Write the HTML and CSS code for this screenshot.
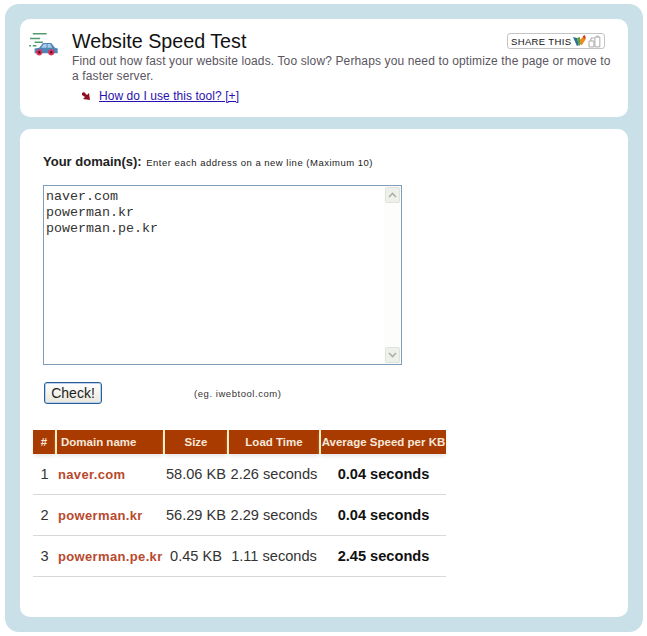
FILE: index.html
```html
<!DOCTYPE html>
<html lang="en">
<head>
<meta charset="utf-8">
<title>Website Speed Test</title>
<link rel="stylesheet" href="styles.css">
</head>
<body>
<div class="panel">
  <section class="card intro">
    <svg class="car" viewBox="0 0 34 26">
      <path d="M7 2h15M4 7h11M9 11h9M3 15h2M7 15h4" stroke="#4f9d6f" stroke-width="1.6" fill="none"/>
      <path d="M9 23v-5l5-1 4-5h9l4 5 3 1v5z" fill="#4f86b8"/>
      <path d="M19 13h3v4h-6zM23 13h3l2 4h-5z" fill="#a9cbe6"/>
      <circle cx="14" cy="22" r="3.4" fill="#d8365f"/><circle cx="14" cy="22" r="1.3" fill="#5a1028"/>
      <circle cx="27" cy="22" r="3.4" fill="#d8365f"/><circle cx="27" cy="22" r="1.3" fill="#5a1028"/>
    </svg>
    <div class="intro-body">
      <div class="title-row">
        <h1>Website Speed Test</h1>
        <div class="share">
          <span>SHARE THIS</span>
          <svg width="13" height="12" viewBox="0 0 13 12"><path d="M0 2l4 1 2 7-2 1z" fill="#2d6f96"/><path d="M4 3l3-1 1 7-2 2z" fill="#57a13f"/><path d="M7 5l4-4 2 3-4 6H8z" fill="#ef8a1d"/><path d="M10 1l2-1 1 3-2 1z" fill="#d9352b"/></svg>
          <svg width="13" height="13" viewBox="0 0 13 13"><path d="M1 6h5v6H1zM7 2h5v10H7zM3 6V3h3M9 2V1h2" fill="none" stroke="#a9a9a9"/></svg>
        </div>
      </div>
      <p>Find out how fast your website loads. Too slow? Perhaps you need to optimize the page or move to a faster server.</p>
      <div class="help">
        <svg width="9" height="9" viewBox="0 0 9 9"><path d="M0 1l2-1 3 3 2-2 1 7-7-1 2-2-3-2z" fill="#8c0f22"/></svg>
        <a href="#">How do I use this tool? [+]</a>
      </div>
    </div>
  </section>
  <section class="card main">
    <label class="domain-label" for="domains"><b>Your domain(s):</b> <span>Enter each address on a new line (Maximum 10)</span></label>
    <div class="textbox">
      <textarea id="domains" spellcheck="false">naver.com
powerman.kr
powerman.pe.kr</textarea>
      <div class="scroll">
        <div class="arrow"><svg width="9" height="6" viewBox="0 0 9 6"><path d="M1 5l3.5-3.5L8 5" fill="none" stroke="#a8b0a8" stroke-width="1.6"/></svg></div>
        <div class="arrow"><svg width="9" height="6" viewBox="0 0 9 6"><path d="M1 1l3.5 3.5L8 1" fill="none" stroke="#a8b0a8" stroke-width="1.6"/></svg></div>
      </div>
    </div>
    <div class="actions">
      <button type="button">Check!</button>
      <span>(eg. iwebtool.com)</span>
    </div>
    <table>
      <colgroup><col class="c1"><col class="c2"><col class="c3"><col class="c4"><col class="c5"></colgroup>
      <thead>
        <tr><th>#</th><th class="left">Domain name</th><th>Size</th><th>Load Time</th><th>Average Speed per KB</th></tr>
      </thead>
      <tbody>
        <tr><td>1</td><td class="left"><a href="#">naver.com</a></td><td>58.06 KB</td><td>2.26 seconds</td><td class="speed">0.04 seconds</td></tr>
        <tr><td>2</td><td class="left"><a href="#">powerman.kr</a></td><td>56.29 KB</td><td>2.29 seconds</td><td class="speed">0.04 seconds</td></tr>
        <tr><td>3</td><td class="left"><a href="#">powerman.pe.kr</a></td><td>0.45 KB</td><td>1.11 seconds</td><td class="speed">2.45 seconds</td></tr>
      </tbody>
    </table>
  </section>
</div>
</body>
</html>
```
FILE: styles.css
```css
html, body { margin: 0; padding: 0; background: #fff; }
body { font-family: "Liberation Sans", Arial, sans-serif; color: #222; }
.panel {
  width: 608px; height: 598px; margin: 4px 0 0 5px; padding: 15px;
  background: #c9e0e8; border-radius: 14px;
  display: flex; flex-direction: column; gap: 12px;
}
.card { background: #fff; border-radius: 10px; box-sizing: border-box; }
.intro { height: 98px; display: flex; padding: 10px 16px 0 8px; }
.car { flex: none; margin: 3px 14px 0 -2px; width: 32px; height: 24px; }
.intro-body { flex: 1; min-width: 0; }
.title-row { display: flex; justify-content: space-between; align-items: flex-start; }
h1 { margin: 0; font-size: 19.7px; font-weight: 400; line-height: 24px; color: #111; }
.share {
  display: flex; align-items: center; gap: 2px; box-sizing: border-box; height: 16px; width: 98px;
  margin: 4px 7px 0 0; padding: 0 3px 0 3px; border: 1px solid #c4c4c4; border-radius: 3px;
  font-size: 9.5px; letter-spacing: 0.35px; color: #111; white-space: nowrap;
}
.intro p { margin: 1px 0 0; font-size: 12px; letter-spacing: 0.13px; line-height: 15px; color: #5a5560; }
.help { display: flex; align-items: center; gap: 8px; margin: 5px 0 0 10px; font-size: 12px; letter-spacing: 0.06px; line-height: 15px; }
.help a { color: #2a0fb0; }
.main { height: 488px; padding: 24px 0 0 13px; }
.domain-label { display: block; margin-left: 10px; line-height: 16px; color: #222; }
.domain-label b { font-size: 13px; }
.domain-label span { font-size: 9.5px; letter-spacing: 0.5px; }
.textbox {
  display: flex; box-sizing: border-box; width: 359px; height: 180px; margin: 14px 0 0 10px;
  border: 1px solid #7f9db9;
}
textarea {
  flex: 1; min-width: 0; margin: 0; padding: 3px 2px; border: 0; outline: 0; resize: none; overflow: hidden;
  font-family: "Liberation Mono", "Courier New", monospace; font-size: 13.33px; line-height: 16px; color: #333;
}
.scroll { width: 17px; display: flex; flex-direction: column; justify-content: space-between; background: #fdfdfb; }
.arrow {
  height: 16px; margin: 1px; display: flex; align-items: center; justify-content: center;
  background: #eef0ea; border: 1px solid #e0e2dc; border-radius: 2px; box-sizing: border-box;
}
.actions { display: flex; align-items: center; margin: 17px 0 0 11px; }
button {
  box-sizing: border-box; width: 58px; height: 22px; padding: 0; margin: 0;
  border: 1px solid #2b5f94; border-radius: 3px;
  background: linear-gradient(#fff, #e9e7dc); box-shadow: inset 0 0 0 1px #b9d0ee;
  font-family: "Liberation Sans", Arial, sans-serif; font-size: 14px; color: #222;
}
.actions span { margin-left: 92px; font-size: 9.5px; letter-spacing: 0.55px; color: #333; }
table {
  width: 413px; margin-top: 26px; table-layout: fixed; border-collapse: collapse;
}
.c1 { width: 23px; } .c2 { width: 108px; } .c3 { width: 64px; } .c4 { width: 92px; } .c5 { width: 126px; }
th {
  height: 24px; padding: 0; background: #a93a00; color: #f6e8dc; font-size: 11.5px; font-weight: 700;
  text-align: center; border-left: 2px solid #ffeebb; white-space: nowrap;
  box-shadow: 0 3px 4px -1px #e4e4e4;
}
th:first-child { border-left: 0; }
th.left { text-align: left; padding-left: 4px; }
td {
  height: 40px; padding: 0; border-bottom: 1px solid #d8d8d8; text-align: center;
  font-size: 14.6px; color: #333; white-space: nowrap; overflow: visible;
}
td.left { text-align: left; padding-left: 2px; }
td a { color: #b8492c; font-size: 13px; font-weight: 700; letter-spacing: 0.35px; text-decoration: none; }
td.speed { font-weight: 700; color: #111; padding-left: 1px; }
```
